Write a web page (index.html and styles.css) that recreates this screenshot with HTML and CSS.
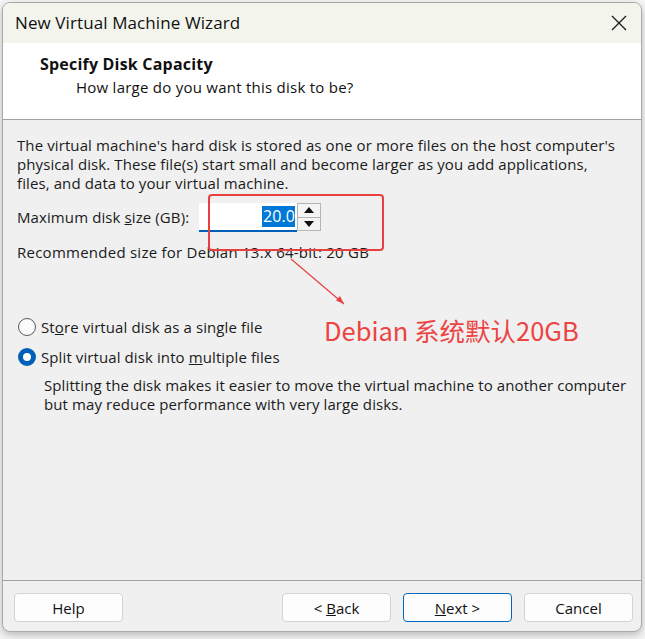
FILE: index.html
```html
<!DOCTYPE html>
<html>
<head>
<meta charset="utf-8">
<link rel="stylesheet" href="styles.css">
</head>
<body>
<div class="window">
  <div class="titlebar">
    <span class="title">New Virtual Machine Wizard</span>
    <svg class="close" width="16" height="16" viewBox="0 0 16 16"><path d="M1 1L15 15M15 1L1 15" stroke="#1a1a1a" stroke-width="1.3" fill="none"/></svg>
  </div>
  <div class="header">
    <div class="h-title">Specify Disk Capacity</div>
    <div class="h-sub">How large do you want this disk to be?</div>
  </div>
  <div class="content">
    <p class="intro">The virtual machine's hard disk is stored as one or more files on the host computer's<br>physical disk. These file(s) start small and become larger as you add applications,<br>files, and data to your virtual machine.</p>
    <div class="size-row">
      <span class="label">Maximum disk <u>s</u>ize (GB):</span>
      <div class="spin">
        <div class="spin-field"><span class="sel">20.0</span></div>
        <div class="spin-btns">
          <div class="spin-btn"><svg width="10" height="6" viewBox="0 0 10 6"><path d="M5 0L10 6H0Z" fill="#111"/></svg></div>
          <div class="spin-btn"><svg width="10" height="6" viewBox="0 0 10 6"><path d="M0 0H10L5 6Z" fill="#111"/></svg></div>
        </div>
      </div>
    </div>
    <p class="rec">Recommended size for Debian 13.x 64-bit: 20 GB</p>
    <div class="radios">
      <label class="radio"><span class="dot"></span><span>St<u>o</u>re virtual disk as a single file</span></label>
      <label class="radio"><span class="dot on"></span><span>Split virtual disk into <u>m</u>ultiple files</span></label>
    </div>
    <p class="desc">Splitting the disk makes it easier to move the virtual machine to another computer<br>but may reduce performance with very large disks.</p>
  </div>
  <div class="footer">
    <button class="btn">Help</button>
    <div class="spacer"></div>
    <button class="btn">&lt; <u>B</u>ack</button>
    <button class="btn primary"><u>N</u>ext &gt;</button>
    <button class="btn">Cancel</button>
  </div>
  <div class="anno-box"></div>
  <svg class="anno-arrow" width="70" height="60" viewBox="0 0 70 60"><path d="M2 2L55 47" stroke="#e8403f" stroke-width="1.2" fill="none"/><path d="M55 47L47 43.5L51 39Z" fill="#e8403f"/></svg>
  <div class="anno-text">Debian 系统默认20GB</div>
</div>
</body>
</html>
```
FILE: styles.css
```css
* { box-sizing: border-box; }
html, body { margin: 0; padding: 0; }
body {
  width: 645px;
  height: 639px;
  background: #f6f6f6;
  font-family: "Open Sans", "Noto Sans", sans-serif;
  color: #1b1b1b;
  overflow: hidden;
}
.window {
  position: relative;
  margin: 2px 0 0 2px;
  width: 640px;
  height: 630px;
  border: 1px solid #a9a9a9;
  border-radius: 8px;
  overflow: hidden;
  background: #f0f0f0;
  display: flex;
  flex-direction: column;
  box-shadow: 0 3px 8px rgba(0,0,0,0.25);
}
.titlebar {
  height: 40px;
  background: #f3f5ec;
  display: flex;
  align-items: center;
  justify-content: space-between;
  padding: 0 14px 2px 12px;
}
.title { font-size: 17px; letter-spacing: 0.1px; color: #111; }
.close { margin-top: 2px; }
.header {
  height: 77px;
  background: #fff;
  border-bottom: 1px solid #a0a0a0;
  padding: 10px 0 0 37px;
}
.h-title { font-size: 16px; font-weight: 700; line-height: 22px; letter-spacing: 0.2px; color: #111; }
.h-sub { font-size: 15px; line-height: 22px; margin-top: 1px; padding-left: 36px; letter-spacing: 0.25px; color: #111; }
.content {
  flex: 1;
  padding: 16px 10px 0 14px;
  font-size: 15px;
  line-height: 19px;
  letter-spacing: 0.1px;
}
.content p { margin: 0; }
.intro { white-space: nowrap; }
.size-row { display: flex; align-items: center; margin-top: 10px; height: 29px; }
.label { width: 182px; }
.spin { display: flex; height: 29px; }
.spin-field {
  width: 98px;
  height: 29px;
  background: #fff;
  border-bottom: 2px solid #005fb8;
  display: flex;
  align-items: center;
  justify-content: flex-end;
  padding-right: 2px;
}
.sel { background: #0078d7; color: #fff; font-size: 16px; line-height: 21px; padding: 0 0 0 1px; }
.spin-btns { display: flex; flex-direction: column; width: 24px; height: 28px; }
.spin-btn {
  flex: 1;
  background: #f4f4f4;
  border: 1px solid #b5b5b5;
  display: flex;
  align-items: center;
  justify-content: center;
}
.spin-btn + .spin-btn { border-top: none; }
.rec { margin-top: 11px !important; letter-spacing: 0.25px; }
.radios { margin-top: 55px; display: flex; flex-direction: column; gap: 10px; }
.radio { display: flex; align-items: center; height: 20px; gap: 5px; margin-left: 1px; }
.dot {
  width: 18px; height: 18px;
  border-radius: 50%;
  border: 1px solid #5a5a5a;
  background: #fbfbfb;
  flex: none;
}
.dot.on {
  border: 5px solid #005fb8;
  background: #fff;
}
.desc { margin: 9px 0 0 27px !important; white-space: nowrap; }
.footer {
  height: 51px;
  border-top: 1px solid #a0a0a0;
  display: flex;
  align-items: flex-start;
  padding: 12px 8px 0 11px;
  gap: 12px;
}
.spacer { flex: 1; }
.btn {
  width: 109px;
  height: 29px;
  background: #fdfdfd;
  border: 1px solid #d3d3d3;
  border-radius: 4px;
  font-family: "Open Sans", "Noto Sans", sans-serif;
  font-size: 15px;
  line-height: 26px;
  letter-spacing: 0;
  color: #111;
  padding: 0;
}
.btn.primary { border-color: #0067c0; }
.anno-box {
  position: absolute;
  left: 205px; top: 191px;
  width: 176px; height: 57px;
  border: 2px solid #e8403f;
  border-radius: 4px;
}
.anno-arrow { position: absolute; left: 286px; top: 254px; }
.anno-text {
  position: absolute;
  left: 321px; top: 310px;
  font-family: "Noto Sans CJK SC", sans-serif;
  font-size: 25.5px;
  line-height: 34px;
  color: #ec4343;
}
```
